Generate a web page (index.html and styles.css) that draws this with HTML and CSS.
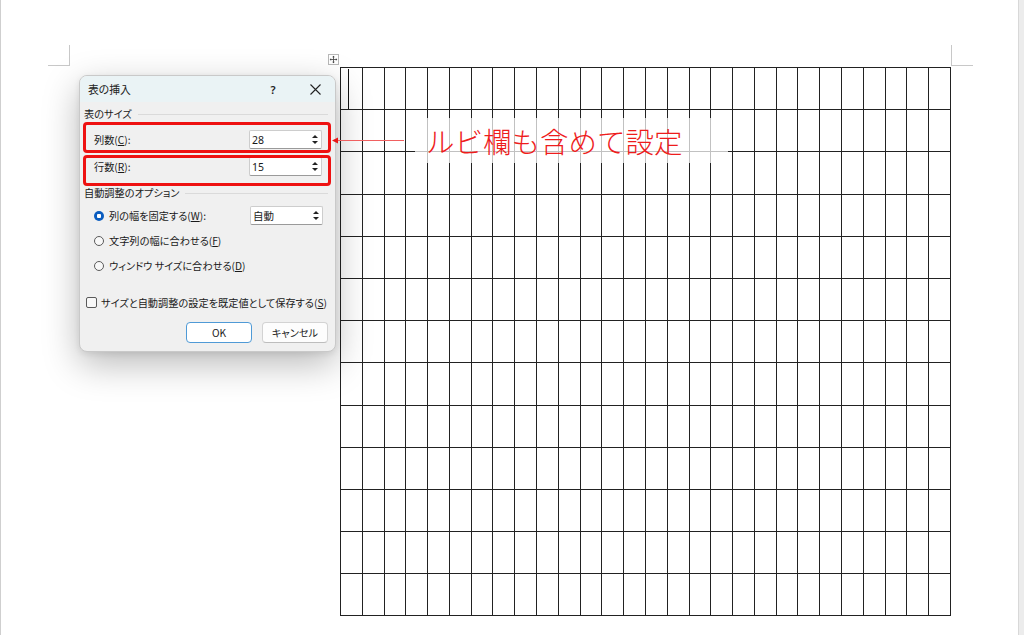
FILE: index.html
```html
<!DOCTYPE html>
<html lang="ja">
<head>
<meta charset="utf-8">
<title>表の挿入</title>
<link rel="stylesheet" href="styles.css">
</head>
<body>
<div class="stage">
  <div class="mark mark-tl"></div>
  <div class="mark mark-tr"></div>
  <div class="scroll-strip"></div>

  <div class="page">
    <div class="move-handle">
      <svg width="11" height="11" viewBox="0 0 11 11"><path d="M5.5 1.5v8M1.5 5.5h8" stroke="#444" stroke-width="1"/><path d="M5.5 0.8l-1.6 1.8h3.2zM5.5 10.2l-1.6-1.8h3.2zM0.8 5.5l1.8-1.6v3.2zM10.2 5.5l-1.8-1.6v3.2z" fill="#444"/></svg>
    </div>
    <table class="grid">
      <tr><td><span class="caret"></span></td><td></td><td></td><td></td><td></td><td></td><td></td><td></td><td></td><td></td><td></td><td></td><td></td><td></td><td></td><td></td><td></td><td></td><td></td><td></td><td></td><td></td><td></td><td></td><td></td><td></td><td></td><td></td></tr>
      <tr><td></td><td></td><td></td><td></td><td></td><td></td><td></td><td></td><td></td><td></td><td></td><td></td><td></td><td></td><td></td><td></td><td></td><td></td><td></td><td></td><td></td><td></td><td></td><td></td><td></td><td></td><td></td><td></td></tr>
      <tr><td></td><td></td><td></td><td></td><td></td><td></td><td></td><td></td><td></td><td></td><td></td><td></td><td></td><td></td><td></td><td></td><td></td><td></td><td></td><td></td><td></td><td></td><td></td><td></td><td></td><td></td><td></td><td></td></tr>
      <tr><td></td><td></td><td></td><td></td><td></td><td></td><td></td><td></td><td></td><td></td><td></td><td></td><td></td><td></td><td></td><td></td><td></td><td></td><td></td><td></td><td></td><td></td><td></td><td></td><td></td><td></td><td></td><td></td></tr>
      <tr><td></td><td></td><td></td><td></td><td></td><td></td><td></td><td></td><td></td><td></td><td></td><td></td><td></td><td></td><td></td><td></td><td></td><td></td><td></td><td></td><td></td><td></td><td></td><td></td><td></td><td></td><td></td><td></td></tr>
      <tr><td></td><td></td><td></td><td></td><td></td><td></td><td></td><td></td><td></td><td></td><td></td><td></td><td></td><td></td><td></td><td></td><td></td><td></td><td></td><td></td><td></td><td></td><td></td><td></td><td></td><td></td><td></td><td></td></tr>
      <tr><td></td><td></td><td></td><td></td><td></td><td></td><td></td><td></td><td></td><td></td><td></td><td></td><td></td><td></td><td></td><td></td><td></td><td></td><td></td><td></td><td></td><td></td><td></td><td></td><td></td><td></td><td></td><td></td></tr>
      <tr><td></td><td></td><td></td><td></td><td></td><td></td><td></td><td></td><td></td><td></td><td></td><td></td><td></td><td></td><td></td><td></td><td></td><td></td><td></td><td></td><td></td><td></td><td></td><td></td><td></td><td></td><td></td><td></td></tr>
      <tr><td></td><td></td><td></td><td></td><td></td><td></td><td></td><td></td><td></td><td></td><td></td><td></td><td></td><td></td><td></td><td></td><td></td><td></td><td></td><td></td><td></td><td></td><td></td><td></td><td></td><td></td><td></td><td></td></tr>
      <tr><td></td><td></td><td></td><td></td><td></td><td></td><td></td><td></td><td></td><td></td><td></td><td></td><td></td><td></td><td></td><td></td><td></td><td></td><td></td><td></td><td></td><td></td><td></td><td></td><td></td><td></td><td></td><td></td></tr>
      <tr><td></td><td></td><td></td><td></td><td></td><td></td><td></td><td></td><td></td><td></td><td></td><td></td><td></td><td></td><td></td><td></td><td></td><td></td><td></td><td></td><td></td><td></td><td></td><td></td><td></td><td></td><td></td><td></td></tr>
      <tr><td></td><td></td><td></td><td></td><td></td><td></td><td></td><td></td><td></td><td></td><td></td><td></td><td></td><td></td><td></td><td></td><td></td><td></td><td></td><td></td><td></td><td></td><td></td><td></td><td></td><td></td><td></td><td></td></tr>
      <tr><td></td><td></td><td></td><td></td><td></td><td></td><td></td><td></td><td></td><td></td><td></td><td></td><td></td><td></td><td></td><td></td><td></td><td></td><td></td><td></td><td></td><td></td><td></td><td></td><td></td><td></td><td></td><td></td></tr>
    </table>
  </div>

  <div class="dialog">
    <div class="titlebar">
      <span class="title">表の挿入</span>
      <span class="help">?</span>
      <span class="close">
        <svg width="11" height="11" viewBox="0 0 11 11"><path d="M0.5 0.5L10.5 10.5M10.5 0.5L0.5 10.5" stroke="#222" stroke-width="1.1"/></svg>
      </span>
    </div>
    <div class="dbody">
      <div class="group-label"><span>表のサイズ</span><i class="rule"></i></div>
      <div class="field-row first">
        <span class="flabel">列数(<u>C</u>):</span>
        <div class="spin"><span class="spin-val">28</span><span class="spin-btns"><i class="up"></i><i class="down"></i></span></div>
      </div>
      <div class="field-row second">
        <span class="flabel">行数(<u>R</u>):</span>
        <div class="spin"><span class="spin-val">15</span><span class="spin-btns"><i class="up"></i><i class="down"></i></span></div>
      </div>
      <div class="group-label g2"><span>自動調整のオプション</span><i class="rule"></i></div>
      <div class="radio-row r1">
        <span class="radio on"></span>
        <span class="flabel">列の幅を固定する(<u>W</u>):</span>
        <div class="spin"><span class="spin-val">自動</span><span class="spin-btns"><i class="up"></i><i class="down"></i></span></div>
      </div>
      <div class="radio-row">
        <span class="radio"></span>
        <span class="flabel">文字列の幅に合わせる(<u>F</u>)</span>
      </div>
      <div class="radio-row">
        <span class="radio"></span>
        <span class="flabel">ウィンドウ サイズに合わせる(<u>D</u>)</span>
      </div>
      <div class="check-row">
        <span class="checkbox"></span>
        <span>サイズと自動調整の設定を既定値として保存する(<u>S</u>)</span>
      </div>
      <div class="buttons">
        <button class="btn primary">OK</button>
        <button class="btn">キャンセル</button>
      </div>
    </div>
  </div>

  <div class="hl hl1"></div>
  <div class="hl hl2"></div>
  <div class="arrow">
    <svg width="72" height="9" viewBox="0 0 72 9"><path d="M0 4.5L6 1.5V7.5Z" fill="#e81818"/><path d="M6 4.5H72" stroke="#f06060" stroke-width="1"/></svg>
  </div>
  <div class="callout">ルビ欄も含めて設定</div>
</div>
</body>
</html>
```

FILE: styles.css
```css
html, body {
  margin: 0;
  padding: 0;
  background: #fff;
}

.stage {
  position: relative;
  width: 1024px;
  height: 635px;
  overflow: hidden;
  background: #fff;
  box-shadow: inset 1px 0 0 #cfcfcf;
  font-family: "Noto Sans CJK JP", "Noto Sans", sans-serif;
}

.mark {
  position: absolute;
  top: 45px;
  width: 21px;
  height: 20px;
  border-bottom: 1px solid #c8c8c8;
}
.mark-tl {
  left: 48px;
  border-right: 1px solid #c8c8c8;
}
.mark-tr {
  left: 951px;
  border-left: 1px solid #c8c8c8;
}

.scroll-strip {
  position: absolute;
  right: 0;
  top: 0;
  bottom: 0;
  width: 5px;
  background: #ececec;
  border-left: 1px solid #d8d8d8;
}

.page {
  padding: 67px 0 0 340px;
  position: relative;
}

.move-handle {
  position: absolute;
  left: 328px;
  top: 54px;
  width: 11px;
  height: 11px;
  border: 1px solid #b8b8b8;
  background: #fff;
  box-sizing: border-box;
  display: flex;
  align-items: center;
  justify-content: center;
}
.move-handle svg {
  width: 9px;
  height: 9px;
}

.grid {
  border-collapse: collapse;
  table-layout: fixed;
  width: 611px;
}
.grid td {
  border: 1px solid #222;
  padding: 0;
  height: 41.2px;
}
.caret {
  display: block;
  width: 1px;
  height: 40px;
  margin-left: 7px;
  background: #111;
}

/* Dialog */
.dialog {
  position: absolute;
  left: 79px;
  top: 75px;
  width: 257px;
  height: 277px;
  box-sizing: border-box;
  background: #f0f0f0;
  border: 1px solid #c9c9c9;
  border-radius: 8px;
  box-shadow: 0 12px 36px rgba(0, 0, 0, 0.28), 0 2px 6px rgba(0, 0, 0, 0.08);
  display: flex;
  flex-direction: column;
  font-size: 10.2px;
  color: #1a1a1a;
  font-feature-settings: "palt";
}

.titlebar {
  height: 26px;
  display: flex;
  align-items: center;
  padding: 0 8px 0 8px;
  background: #eaf3f5;
  border-radius: 7px 7px 0 0;
}
.title {
  flex: 1;
  font-size: 10.8px;
  color: #222;
}
.help {
  width: 20px;
  text-align: center;
  font-family: "Noto Sans", sans-serif;
  font-size: 11px;
  font-weight: 600;
  color: #222;
  margin-right: 20px;
}
.close {
  width: 24px;
  display: flex;
  justify-content: center;
}

.dbody {
  padding: 0 7px 8px 4px;
  display: flex;
  flex-direction: column;
}

.group-label {
  height: 12px;
  line-height: 12px;
  margin-top: 6px;
  display: flex;
  align-items: center;
}
.group-label .rule {
  flex: 1;
  margin-left: 6px;
  margin-right: 0;
  border-top: 1px solid #dadada;
}
.group-label.g2 {
  margin-top: 11px;
}

.field-row {
  display: flex;
  align-items: center;
  height: 19px;
  padding-left: 10px;
  padding-right: 6px;
}
.field-row.first {
  margin-top: 10px;
}
.field-row.second {
  margin-top: 8px;
}
.flabel {
  flex: 1;
  white-space: nowrap;
}

.spin {
  width: 73px;
  height: 19px;
  box-sizing: border-box;
  background: #fff;
  border: 1px solid #cdcdcd;
  border-bottom-color: #9a9a9a;
  border-radius: 2px;
  display: flex;
  align-items: center;
}
.spin-val {
  flex: 1;
  padding-left: 2px;
  font-family: "Noto Sans", "Noto Sans CJK JP", sans-serif;
  font-size: 10.5px;
}
.spin-btns {
  width: 12px;
  height: 17px;
  display: flex;
  flex-direction: column;
  justify-content: space-evenly;
  align-items: center;
}
.spin-btns i {
  display: block;
  width: 0;
  height: 0;
  border-left: 3px solid transparent;
  border-right: 3px solid transparent;
}
.spin-btns .up {
  border-bottom: 3.5px solid #222;
}
.spin-btns .down {
  border-top: 3.5px solid #222;
}

.radio-row {
  display: flex;
  align-items: center;
  height: 19px;
  padding-left: 10px;
  padding-right: 5px;
  margin-top: 6px;
}
.radio-row.r1 {
  margin-top: 7px;
}
.radio {
  width: 10px;
  height: 10px;
  box-sizing: border-box;
  border-radius: 50%;
  border: 1px solid #5a5a5a;
  background: #f8f8f8;
  margin-right: 5px;
  flex: none;
}
.radio.on {
  border: none;
  background: radial-gradient(circle, #fff 0 2px, #0a5cbf 2.5px);
}

.check-row {
  display: flex;
  align-items: center;
  height: 12px;
  margin-top: 21px;
  padding-left: 2px;
  white-space: nowrap;
}
.checkbox {
  width: 11px;
  height: 11px;
  box-sizing: border-box;
  border: 1px solid #5a5a5a;
  border-radius: 2px;
  background: #f8f8f8;
  margin-right: 4px;
  flex: none;
}

.buttons {
  margin-top: 14px;
  display: flex;
  justify-content: flex-end;
  gap: 10px;
}
.btn {
  width: 66px;
  height: 21px;
  box-sizing: border-box;
  border: 1px solid #d3d3d3;
  border-bottom-color: #bdbdbd;
  border-radius: 4px;
  background: #fdfdfd;
  font-family: "Noto Sans CJK JP", sans-serif;
  font-size: 10.2px;
  color: #1a1a1a;
  padding: 0;
  font-feature-settings: "palt";
}
.btn.primary {
  border: 1.5px solid #4f9ad6;
  background: #fff;
}

/* Annotation overlays */
.hl {
  position: absolute;
  left: 83px;
  width: 248px;
  height: 31px;
  box-sizing: border-box;
  border: 3px solid #ee1111;
  border-radius: 4px;
}
.hl1 {
  top: 122px;
}
.hl2 {
  top: 155px;
}

.arrow {
  position: absolute;
  left: 332px;
  top: 136px;
  width: 72px;
  height: 9px;
  line-height: 0;
}

.callout {
  position: absolute;
  left: 415px;
  top: 118px;
  width: 313px;
  height: 45px;
  box-sizing: border-box;
  padding-left: 11px;
  background: rgba(255, 255, 255, 0.72);
  color: #ee1c1c;
  font-family: "Noto Sans CJK JP", sans-serif;
  font-weight: 300;
  font-size: 28.5px;
  line-height: 45px;
  white-space: nowrap;
}
```
